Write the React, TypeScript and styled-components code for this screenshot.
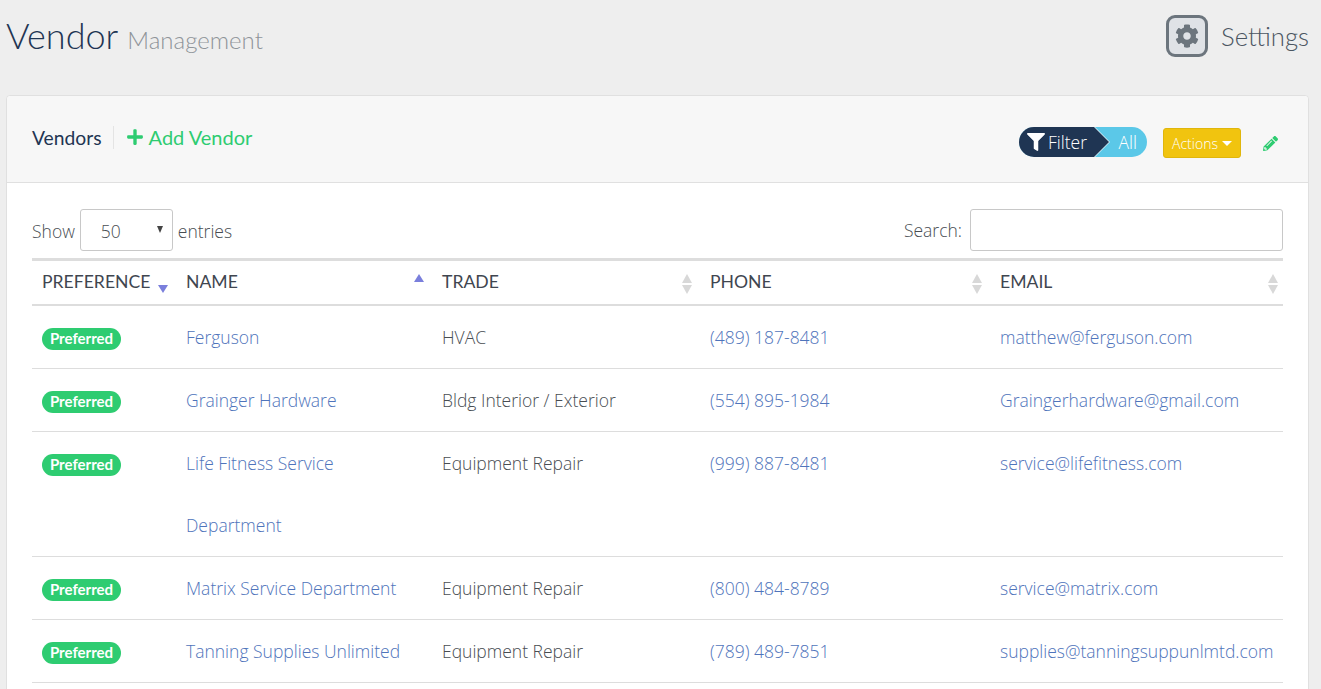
import React from "react";
import styled, { createGlobalStyle } from "styled-components";
import { FaCog, FaFilter, FaPencilAlt, FaPlus } from "react-icons/fa";

const vendors = [
  { name: "Ferguson", trade: "HVAC", phone: "(489) 187-8481", email: "matthew@ferguson.com" },
  { name: "Grainger Hardware", trade: "Bldg Interior / Exterior", phone: "(554) 895-1984", email: "Graingerhardware@gmail.com" },
  { name: "Life Fitness Service Department", trade: "Equipment Repair", phone: "(999) 887-8481", email: "service@lifefitness.com" },
  { name: "Matrix Service Department", trade: "Equipment Repair", phone: "(800) 484-8789", email: "service@matrix.com" },
  { name: "Tanning Supplies Unlimited", trade: "Equipment Repair", phone: "(789) 489-7851", email: "supplies@tanningsuppunlmtd.com" },
];

const App = () => (
  <>
    <GlobalStyle />
    <PageHeader>
      <Title>
        Vendor <small>Management</small>
      </Title>
      <SettingsLink>
        <SettingsIcon>
          <FaCog />
        </SettingsIcon>
        Settings
      </SettingsLink>
    </PageHeader>
    <Card>
      <CardHead>
        <CardTitle>Vendors</CardTitle>
        <AddVendor>
          <FaPlus />
          Add Vendor
        </AddVendor>
        <CardTools>
          <FilterPill>
            <FilterLabel>
              <FaFilter />
              Filter
            </FilterLabel>
            <FilterValue>All</FilterValue>
          </FilterPill>
          <ActionsButton>
            Actions
            <Caret />
          </ActionsButton>
          <EditIcon>
            <FaPencilAlt />
          </EditIcon>
        </CardTools>
      </CardHead>
      <CardBody>
        <TableControls>
          <ControlLabel $baseline>
            Show
            <SelectBox>
              50
              <SelectArrow />
            </SelectBox>
            entries
          </ControlLabel>
          <ControlLabel>
            Search:
            <SearchInput type="text" />
          </ControlLabel>
        </TableControls>
        <Table>
          <thead>
            <tr>
              <Th width={144}>
                PREFERENCE
                <SortDown />
              </Th>
              <Th width={256}>
                NAME
                <SortUp />
              </Th>
              <Th width={268}>
                TRADE
                <SortPair />
              </Th>
              <Th width={290}>
                PHONE
                <SortPair />
              </Th>
              <Th width={293}>
                EMAIL
                <SortPair $last />
              </Th>
            </tr>
          </thead>
          <tbody>
            {vendors.map((v) => (
              <tr key={v.email}>
                <Td>
                  <Badge>Preferred</Badge>
                </Td>
                <Td>
                  <VendorLink>{v.name}</VendorLink>
                </Td>
                <Td>{v.trade}</Td>
                <Td>
                  <VendorLink>{v.phone}</VendorLink>
                </Td>
                <Td>
                  <VendorLink>{v.email}</VendorLink>
                </Td>
              </tr>
            ))}
          </tbody>
        </Table>
      </CardBody>
    </Card>
  </>
);

export default App;

const GlobalStyle = createGlobalStyle`
  html, body {
    margin: 0;
    height: 689px;
    overflow: hidden;
    background: #eeeeee;
  }
  body {
    font-family: "Open Sans", "Liberation Sans", sans-serif;
    font-weight: 300;
    color: #484d52;
  }
  * {
    box-sizing: border-box;
  }
`;

const PageHeader = styled.header`
  display: flex;
  justify-content: space-between;
  align-items: flex-start;
  height: 95px;
  padding: 15px 12px 0 6px;
`;

const Title = styled.h1`
  margin: -1px 0 0;
  font-family: Lato, sans-serif;
  font-size: 36px;
  font-weight: 300;
  line-height: 43px;
  color: #1f3553;

  small {
    font-size: 24px;
    font-weight: 300;
    color: #8f9499;
  }
`;

const SettingsLink = styled.div`
  display: flex;
  align-items: center;
  gap: 13px;
  font-family: Lato, sans-serif;
  font-size: 25.7px;
  font-weight: 300;
  line-height: 42px;
  color: #4b5662;
`;

const SettingsIcon = styled.span`
  display: flex;
  align-items: center;
  justify-content: center;
  width: 42px;
  height: 42px;
  border: 3px solid #6c757d;
  border-radius: 9px;
  background: #dfe2e6;
  color: #6c757d;
  font-size: 24px;
`;

const Card = styled.section`
  margin: 0 12px 0 6px;
  border: 1px solid #e0e0e0;
  border-radius: 4px;
  background: #ffffff;
`;

const CardHead = styled.div`
  display: flex;
  align-items: center;
  height: 87px;
  padding: 0 30px 4px 25px;
  border-bottom: 1px solid #e0e0e0;
  border-radius: 4px 4px 0 0;
  background: #f7f7f7;
`;

const CardTitle = styled.h2`
  margin: 0;
  padding-right: 11px;
  border-right: 1px solid #e4e4e4;
  font-family: Lato, sans-serif;
  font-size: 19.3px;
  font-weight: 400;
  line-height: 23px;
  color: #1f3553;
`;

const AddVendor = styled.a`
  display: flex;
  align-items: center;
  gap: 5px;
  margin-left: 12px;
  font-family: Lato, sans-serif;
  font-size: 20px;
  font-weight: 400;
  color: #2ecc71;

  svg {
    font-size: 18px;
  }
`;

const CardTools = styled.div`
  display: flex;
  align-items: flex-start;
  margin: 11px 0 0 auto;
`;

const FilterPill = styled.div`
  display: flex;
  width: 128px;
  height: 30px;
  border-radius: 15px;
  overflow: hidden;
  background: #5bc8e8;
  font-size: 17.5px;
  line-height: 30px;
  color: #ffffff;
`;

const FilterLabel = styled.span`
  position: relative;
  isolation: isolate;
  display: flex;
  align-items: center;
  gap: 3px;
  width: 91px;
  padding-left: 8px;

  &::before,
  &::after {
    content: "";
    position: absolute;
    inset: 0;
    z-index: -1;
  }
  &::before {
    background: #dff3fa;
    clip-path: polygon(0 0, 76px 0, 91px 15px, 76px 30px, 0 30px);
  }
  &::after {
    background: #1f3553;
    clip-path: polygon(0 0, 75px 0, 90px 15px, 75px 30px, 0 30px);
  }

  svg {
    font-size: 18px;
  }
`;

const FilterValue = styled.span`
  margin-left: auto;
  padding-right: 10px;
`;

const ActionsButton = styled.button`
  display: flex;
  align-items: center;
  justify-content: center;
  gap: 4px;
  width: 78px;
  height: 30px;
  margin: 1px 0 0 16px;
  padding: 0;
  border: 1px solid #e0b60c;
  border-radius: 3px;
  background: #f1c40f;
  font-family: "Open Sans", sans-serif;
  font-size: 14px;
  font-weight: 300;
  color: #ffffff;
`;

const Caret = styled.span`
  width: 0;
  height: 0;
  border-top: 5px solid #ffffff;
  border-left: 5px solid transparent;
  border-right: 5px solid transparent;
`;

const EditIcon = styled.span`
  display: flex;
  margin: 9px 0 0 22px;
  font-size: 15px;
  color: #2ecc71;
`;

const CardBody = styled.div`
  padding: 26px 25px 40px 25px;
`;

const TableControls = styled.div`
  display: flex;
  justify-content: space-between;
  align-items: center;
  height: 42px;
  margin-bottom: 7px;
`;

const ControlLabel = styled.label<{ $baseline?: boolean }>`
  display: flex;
  align-items: ${({ $baseline }) => ($baseline ? "baseline" : "center")};
  gap: 5px;
  font-size: 17.5px;
  color: #484d52;
`;

const SelectBox = styled.span`
  position: relative;
  display: block;
  width: 93px;
  height: 42px;
  padding-left: 20px;
  border: 1px solid #c8c8c8;
  border-radius: 3px;
  background: #ffffff;
  font-size: 17.5px;
  line-height: 42px;
`;

const SelectArrow = styled.span`
  position: absolute;
  top: 16px;
  right: 9px;
  width: 0;
  height: 0;
  border-top: 7px solid #444444;
  border-left: 3.5px solid transparent;
  border-right: 3.5px solid transparent;
`;

const SearchInput = styled.input`
  width: 313px;
  height: 42px;
  margin-left: 3px;
  border: 1px solid #c8c8c8;
  border-radius: 3px;
  background: #ffffff;
`;

const Table = styled.table`
  width: 1251px;
  table-layout: fixed;
  border-collapse: collapse;
  border-top: 3px solid #dddddd;
`;

const Th = styled.th`
  position: relative;
  height: 45px;
  padding: 0 10px 2px;
  border-bottom: 2px solid #dddddd;
  font-family: Lato, sans-serif;
  font-size: 17.6px;
  font-weight: 400;
  text-align: left;
  color: #3f4650;
`;

const SortDown = styled.span`
  position: absolute;
  left: 126px;
  top: 24px;
  border-top: 8px solid #7a7fdc;
  border-left: 5px solid transparent;
  border-right: 5px solid transparent;
`;

const SortUp = styled.span`
  position: absolute;
  right: 8px;
  top: 13px;
  border-bottom: 8px solid #7a7fdc;
  border-left: 5px solid transparent;
  border-right: 5px solid transparent;
`;

const SortPair = styled.span<{ $last?: boolean }>`
  position: absolute;
  right: ${({ $last }) => ($last ? 5 : 8)}px;
  top: 13px;
  width: 10px;
  height: 20px;

  &::before,
  &::after {
    content: "";
    position: absolute;
    left: 0;
    border-left: 5px solid transparent;
    border-right: 5px solid transparent;
  }
  &::before {
    top: 0;
    border-bottom: 9px solid #d8d8d8;
  }
  &::after {
    bottom: 0;
    border-top: 9px solid #d8d8d8;
  }
`;

const Td = styled.td`
  padding: 0 10px;
  border-bottom: 1px solid #dddddd;
  font-size: 17.5px;
  line-height: 62px;
  vertical-align: top;
  color: #484d52;
`;

const Badge = styled.span`
  display: inline-block;
  width: 79px;
  height: 22px;
  border-radius: 11px;
  background: #2ecc71;
  font-family: Lato, sans-serif;
  font-size: 15px;
  font-weight: 700;
  line-height: 20px;
  text-align: center;
  vertical-align: middle;
  color: #ffffff;
`;

const VendorLink = styled.a`
  color: #4f74bb;
`;
